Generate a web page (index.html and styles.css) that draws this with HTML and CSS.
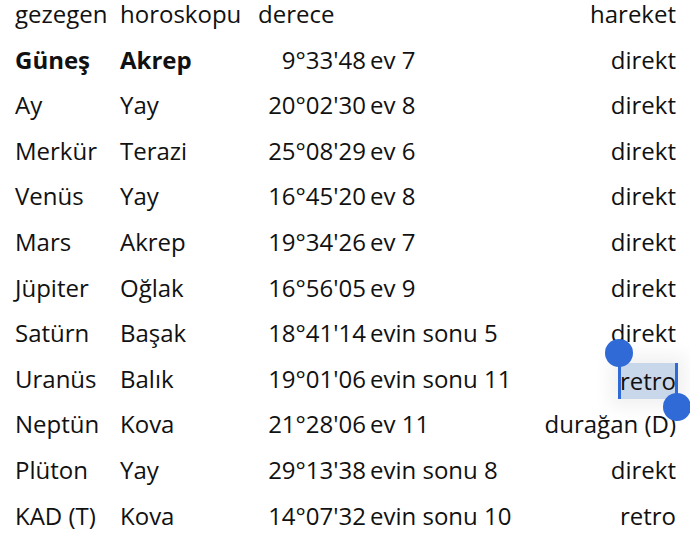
FILE: index.html
```html
<!DOCTYPE html>
<html lang="tr">
<head>
<meta charset="utf-8">
<link rel="stylesheet" href="styles.css">
</head>
<body>
<div class="table">
  <div class="row head">
    <span class="c1">gezegen</span><span class="c2">horoskopu</span><span class="c3h">derece</span><span class="c4"></span><span class="c5">hareket</span>
  </div>
  <div class="row bold">
    <span class="c1">Güneş</span><span class="c2">Akrep</span><span class="c3">9°33'48</span><span class="c4">ev 7</span><span class="c5">direkt</span>
  </div>
  <div class="row">
    <span class="c1">Ay</span><span class="c2">Yay</span><span class="c3">20°02'30</span><span class="c4">ev 8</span><span class="c5">direkt</span>
  </div>
  <div class="row">
    <span class="c1">Merkür</span><span class="c2">Terazi</span><span class="c3">25°08'29</span><span class="c4">ev 6</span><span class="c5">direkt</span>
  </div>
  <div class="row">
    <span class="c1">Venüs</span><span class="c2">Yay</span><span class="c3">16°45'20</span><span class="c4">ev 8</span><span class="c5">direkt</span>
  </div>
  <div class="row">
    <span class="c1">Mars</span><span class="c2">Akrep</span><span class="c3">19°34'26</span><span class="c4">ev 7</span><span class="c5">direkt</span>
  </div>
  <div class="row">
    <span class="c1">Jüpiter</span><span class="c2">Oğlak</span><span class="c3">16°56'05</span><span class="c4">ev 9</span><span class="c5">direkt</span>
  </div>
  <div class="row">
    <span class="c1">Satürn</span><span class="c2">Başak</span><span class="c3">18°41'14</span><span class="c4">evin sonu 5</span><span class="c5">direkt</span>
  </div>
  <div class="row">
    <span class="c1">Uranüs</span><span class="c2">Balık</span><span class="c3">19°01'06</span><span class="c4">evin sonu 11</span><span class="c5"><span class="sel">retro<i class="h hl"></i><i class="h hr"></i></span></span>
  </div>
  <div class="row">
    <span class="c1">Neptün</span><span class="c2">Kova</span><span class="c3">21°28'06</span><span class="c4">ev 11</span><span class="c5">durağan (D)</span>
  </div>
  <div class="row">
    <span class="c1">Plüton</span><span class="c2">Yay</span><span class="c3">29°13'38</span><span class="c4">evin sonu 8</span><span class="c5">direkt</span>
  </div>
  <div class="row">
    <span class="c1">KAD (T)</span><span class="c2">Kova</span><span class="c3">14°07'32</span><span class="c4">evin sonu 10</span><span class="c5">retro</span>
  </div>
</div>
</body>
</html>
```

FILE: styles.css
```css
html, body {
  margin: 0;
  padding: 0;
  background: #ffffff;
  overflow: hidden;
}
body {
  font-family: "Open Sans", "Noto Sans", sans-serif;
  font-size: 24px;
  color: #111111;
}
.table {
  padding: 0 14px 0 15px;
}
.row {
  display: grid;
  grid-template-columns: 105px 138px 108px 1fr auto;
  column-gap: 0;
  height: 45.6px;
  line-height: 45.6px;
  white-space: nowrap;
}
.head {
  height: 36.6px;
  line-height: 27.4px;
}
.bold {
  font-weight: 700;
}
.bold .c3, .bold .c4, .bold .c5 {
  font-weight: 400;
}
.c3 {
  text-align: right;
}
.c4 {
  padding-left: 4px;
}
.c5 {
  text-align: right;
}
.sel {
  position: relative;
  display: inline-block;
  line-height: 36px;
  background: #c9d7ea;
  padding: 0 2px;
  margin-right: -2px;
  vertical-align: middle;
  box-shadow: 0 0 18px 8px rgba(0,0,0,0.06);
}
.h {
  position: absolute;
  width: 3px;
  background: #2f6ad6;
}
.h::after {
  content: "";
  position: absolute;
  width: 28px;
  height: 28px;
  border-radius: 50%;
  background: #2f6ad6;
  left: -12.5px;
}
.hl {
  left: 0;
  top: 0;
  height: 36px;
}
.hl::after {
  top: -24px;
}
.hr {
  right: 0;
  top: 0;
  height: 36px;
}
.hr::after {
  bottom: -22px;
}
```
